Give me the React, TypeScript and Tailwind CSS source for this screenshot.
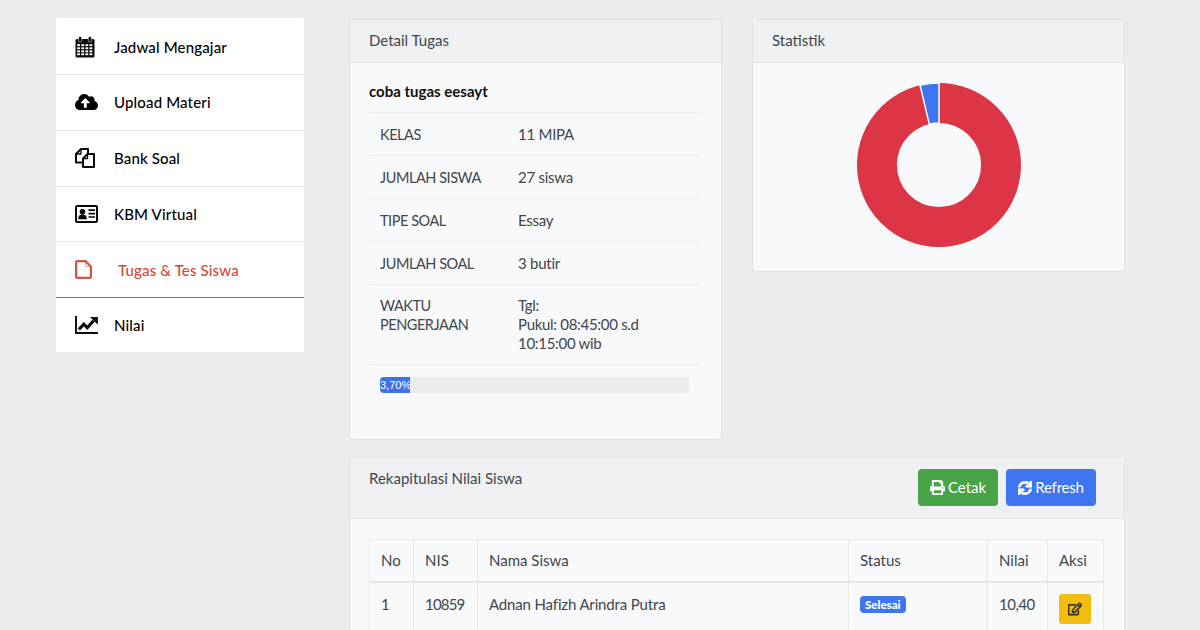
import { FaCloudUploadAlt, FaPrint, FaSync, FaRegEdit } from "react-icons/fa";

const CalendarIcon = () => (
  <svg width="20" height="22" viewBox="0 0 20 22" fill="#0b0b0b">
    <rect x="0.5" y="3" width="19" height="18.5" rx="1.5" />
    <rect x="3.5" y="0.5" width="3.2" height="5.5" rx="1.5" stroke="#fff" strokeWidth="0.5" />
    <rect x="13.3" y="0.5" width="3.2" height="5.5" rx="1.5" stroke="#fff" strokeWidth="0.5" />
    <g fill="#fff">
      {[8.2, 11.3, 14.4, 17.3].map((y) =>
        [2.2, 6.3, 10.4, 14.5].map((x) => <rect key={`${x}-${y}`} x={x} y={y} width="2.8" height="1.9" />)
      )}
    </g>
  </svg>
);

const FilesIcon = () => (
  <svg width="20" height="20" viewBox="0 0 20 20" fill="none" stroke="#0b0b0b" strokeWidth="2" strokeLinejoin="round">
    <path d="M13 6 V1 H6 L1 6 V14.5 H8" />
    <path d="M6 1.5 V6 H1.5" strokeWidth="1.3" />
    <path d="M12.5 6 H19 V19 H8 V10.5 Z" fill="#fff" />
    <path d="M12.5 6 V10.5 H8" strokeWidth="1.3" />
  </svg>
);

const CardIcon = () => (
  <svg width="23" height="18" viewBox="0 0 23 18" fill="none" stroke="#0b0b0b">
    <rect x="1" y="1" width="21" height="16" rx="1" strokeWidth="2" />
    <circle cx="7.5" cy="6.8" r="2.8" fill="#0b0b0b" stroke="none" />
    <path d="M3.2 14.2 C3.2 10 5.5 9.5 7.5 9.5 C9.5 9.5 11.8 10 11.8 14.2 Z" fill="#0b0b0b" stroke="none" />
    <path d="M13.5 5.2 H20 M13.5 8.6 H20 M13.5 12 H20" strokeWidth="1.7" />
  </svg>
);

const FileIcon = () => (
  <svg width="17" height="19" viewBox="0 0 17 19" fill="none" stroke="#d2553f" strokeLinejoin="round">
    <path d="M1.1 2 A1 1 0 0 1 2 1.1 H10.5 L15.9 6.5 V17 A1 1 0 0 1 15 17.9 H2 A1 1 0 0 1 1.1 17 Z" strokeWidth="2.2" />
    <path d="M10.5 1.5 V6.5 H15.5" strokeWidth="0.8" opacity="0.55" />
  </svg>
);

const ChartIcon = () => (
  <svg width="23" height="18" viewBox="0 0 23 18" fill="none" stroke="#0b0b0b">
    <path d="M1 0 V17 H23" strokeWidth="1.9" />
    <path d="M3.8 13.5 L8.8 8.2 L12.3 11.7 L18.5 4.8" strokeWidth="3.2" />
    <path d="M15 1 H22.8 V8.8 Z" fill="#0b0b0b" stroke="none" />
  </svg>
);

const menu = [
  { label: "Jadwal Mengajar", icon: <CalendarIcon /> },
  { label: "Upload Materi", icon: <FaCloudUploadAlt className="w-[23px] h-[20px]" /> },
  { label: "Bank Soal", icon: <FilesIcon /> },
  { label: "KBM Virtual", icon: <CardIcon /> },
];

const details = [
  { label: "KELAS", value: "11 MIPA" },
  { label: "JUMLAH SISWA", value: "27 siswa" },
  { label: "TIPE SOAL", value: "Essay" },
  { label: "JUMLAH SOAL", value: "3 butir" },
];

const Card = ({ title, className, children }: { title: string; className: string; children: React.ReactNode }) => (
  <div className={`bg-[#f8f9fa] border border-[#dfe1e3] rounded-[4px] overflow-hidden ${className}`}>
    <div className="h-[43px] pl-[19px] pb-[2px] flex items-center bg-[#eff0f1] border-b border-[#dfe1e3]">{title}</div>
    {children}
  </div>
);

export default function App() {
  return (
    <div className="h-[630px] overflow-hidden bg-[#ececec] flex items-start pl-[56px] pt-[18px] text-[15px] leading-[19px] text-[#40464c] font-['Lato','Noto_Sans',sans-serif]">
      <aside className="w-[248px] pt-[1.2px] bg-white shrink-0 font-medium text-black tracking-[0.15px] rounded-[2px]">
        {menu.map((m) => (
          <div key={m.label} className="h-[55.8px] flex items-center border-b border-[#e4e4e4]">
            <div className="w-[58px] pl-[19px] flex items-center">{m.icon}</div>
            <span className="pt-px">{m.label}</span>
          </div>
        ))}
        <div className="h-[55.8px] flex items-center border-b border-b-[#d0543f] text-[#d24a36]">
          <div className="w-[62px] pl-[19px] flex items-center"><FileIcon /></div>
          <span className="pt-px">Tugas &amp; Tes Siswa</span>
        </div>
        <div className="h-[53.8px] flex items-center">
          <div className="w-[58px] pl-[19px] flex items-center"><ChartIcon /></div>
          <span className="pt-px">Nilai</span>
        </div>
      </aside>

      <main className="ml-[45px] w-[776px] pt-px flex flex-col gap-[17px]">
        <div className="flex items-start gap-[30px]">
          <Card title="Detail Tugas" className="w-[373px] h-[421px]">
            <div className="pl-[19px] pr-5">
              <div className="h-[50px] pt-[19px] font-bold text-[#111] border-b border-[#e9ecef]">coba tugas eesayt</div>
              {details.map((d) => (
                <div key={d.label} className="h-[43px] flex items-center pl-[11px] border-b border-[#e9ecef]">
                  <span className="w-[138px] text-[14.5px] tracking-[-0.45px]">{d.label}</span>
                  <span className="tracking-[-0.25px]">{d.value}</span>
                </div>
              ))}
              <div className="h-[80px] flex items-start pt-[11px] pl-[11px] border-b border-[#e9ecef]">
                <span className="w-[138px] text-[14.5px] tracking-[-0.45px]">WAKTU PENGERJAAN</span>
                <span className="w-[150px] tracking-[-0.3px]">Tgl:<br />Pukul: 08:45:00 s.d 10:15:00 wib</span>
              </div>
              <div className="mt-3 ml-[11px] mr-3 h-4 bg-[#e9ecef] rounded-[4px] overflow-hidden">
                <div className="w-[30px] h-4 bg-[#3e72e8] text-white text-[11px] leading-4 whitespace-nowrap font-['Liberation_Sans',sans-serif]">3,70%</div>
              </div>
            </div>
          </Card>

          <Card title="Statistik" className="w-[373px] h-[253px]">
            <div className="flex justify-center pt-[20px] pl-px">
              <svg width="164" height="164" viewBox="-83 -83 166 166">
                <circle r="62.8" fill="none" stroke="#dc3545" strokeWidth="40.4" />
                <path d="M0 -83 A83 83 0 0 0 -19.2 -80.7 L-9.8 -41.4 A42.6 42.6 0 0 1 0 -42.6 Z" fill="#3e76f2" stroke="#fff" strokeWidth="1.5" />
              </svg>
            </div>
          </Card>
        </div>

        <div className="bg-[#f8f9fa] border border-[#dfe1e3] rounded-[4px] h-[300px]">
          <div className="h-[61px] pl-[19px] pr-5 pt-[11px] flex justify-between bg-[#eff0f1] border-b border-[#dfe1e3]">
            <span>Rekapitulasi Nilai Siswa</span>
            <div className="flex gap-2 mr-2">
              <button className="h-[37px] w-[80px] rounded-[4px] bg-[#47a447] text-white flex items-center justify-center gap-[3px]"><FaPrint className="w-[15px] h-[15px]" />Cetak</button>
              <button className="h-[37px] w-[90px] rounded-[4px] bg-[#3e76f2] text-white flex items-center justify-center gap-[3px] tracking-[-0.2px]"><FaSync className="w-[14px] h-[14px] stroke-[30]" />Refresh</button>
            </div>
          </div>
          <div className="ml-[19px] mr-5 mt-5 border border-[#e6e8ea] border-b-0">
            <div className="grid grid-cols-[43px_64px_371px_139px_60px_1fr] h-[43px] border-b-2 border-[#e3e5e7]">
              <div className="px-[11px] flex items-center">No</div>
              <div className="px-[11px] flex items-center border-l border-[#e6e8ea]">NIS</div>
              <div className="px-[11px] flex items-center border-l border-[#e6e8ea]">Nama Siswa</div>
              <div className="px-[11px] flex items-center border-l border-[#e6e8ea]">Status</div>
              <div className="px-[11px] flex items-center border-l border-[#e6e8ea]">Nilai</div>
              <div className="px-[11px] flex items-center border-l border-[#e6e8ea]">Aksi</div>
            </div>
            <div className="grid grid-cols-[43px_64px_371px_139px_60px_1fr] h-[60px]">
              <div className="px-[11px] pt-[12px]">1</div>
              <div className="px-[11px] pt-[12px] border-l border-[#e6e8ea] tracking-[-0.8px]">10859</div>
              <div className="px-[11px] pt-[12px] border-l border-[#e6e8ea] tracking-[-0.15px]">Adnan Hafizh Arindra Putra</div>
              <div className="px-[11px] pt-[13px] border-l border-[#e6e8ea]">
                <span className="inline-block h-[17px] px-[5px] rounded-[4px] bg-[#3e76f2] text-white text-[11.5px] leading-[17px] font-black align-top">Selesai</span>
              </div>
              <div className="px-[11px] pt-[12px] border-l border-[#e6e8ea] tracking-[-0.5px]">10,40</div>
              <div className="px-[11px] pt-[11px] border-l border-[#e6e8ea]">
                <div className="w-[32px] h-[30px] rounded-[3px] bg-[#f2bd0f] flex items-center justify-center text-[#2b2f33]"><FaRegEdit className="w-[14px] h-[14px] stroke-[20]" /></div>
              </div>
            </div>
          </div>
        </div>
      </main>
    </div>
  );
}
